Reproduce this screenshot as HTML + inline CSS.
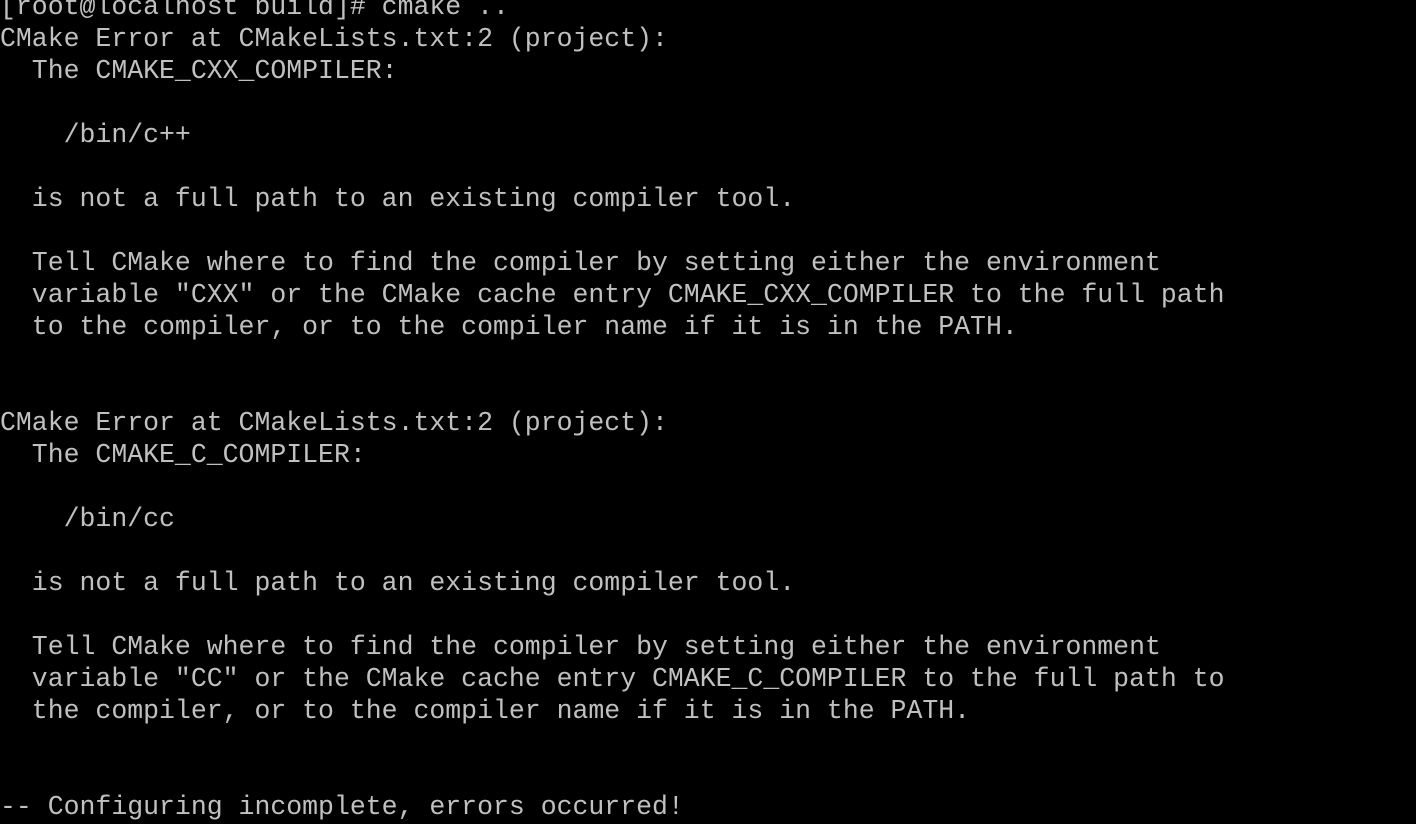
<!DOCTYPE html>
<html><head><meta charset="utf-8"><style>
html,body{margin:0;padding:0;background:#000;width:1416px;height:824px;overflow:hidden}
pre{position:absolute;left:0;top:-9px;margin:0;font-family:"Liberation Mono",monospace;font-size:26.5px;line-height:32px;color:#c0c0c0;letter-spacing:0;font-weight:normal}
</style></head><body><pre>[root@localhost build]# cmake ..
CMake Error at CMakeLists.txt:2 (project):
  The CMAKE_CXX_COMPILER:

    /bin/c++

  is not a full path to an existing compiler tool.

  Tell CMake where to find the compiler by setting either the environment
  variable "CXX" or the CMake cache entry CMAKE_CXX_COMPILER to the full path
  to the compiler, or to the compiler name if it is in the PATH.


CMake Error at CMakeLists.txt:2 (project):
  The CMAKE_C_COMPILER:

    /bin/cc

  is not a full path to an existing compiler tool.

  Tell CMake where to find the compiler by setting either the environment
  variable "CC" or the CMake cache entry CMAKE_C_COMPILER to the full path to
  the compiler, or to the compiler name if it is in the PATH.


-- Configuring incomplete, errors occurred!</pre></body></html>
